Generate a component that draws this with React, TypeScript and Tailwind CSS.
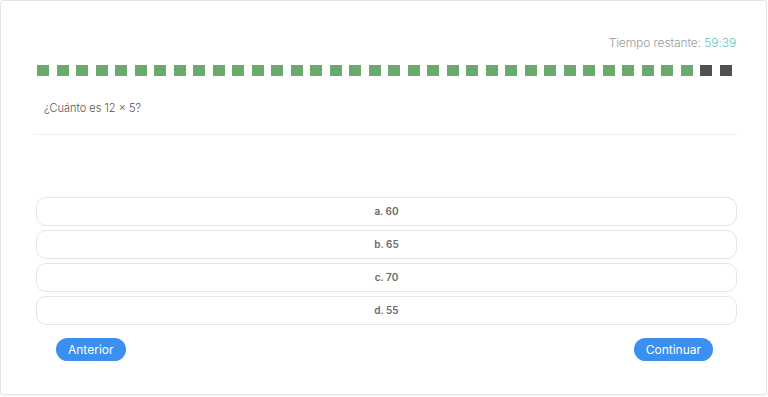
import React from "react";

const squares = Array.from({ length: 36 }, (_, i) => i < 34);
const options = ["a. 60", "b. 65", "c. 70", "d. 55"];

export default function App() {
  return (
    <div className="w-[768px] h-[397px] bg-white" style={{ fontFamily: "Inter, 'Open Sans', sans-serif" }}>
      <div className="w-[767px] h-[395px] border border-[#e4e4e4] rounded-[3px] bg-white shadow-[0_1px_2px_rgba(0,0,0,0.04)] pl-[32px] pr-[29px] pt-[33px]">
        <div className="flex justify-end h-[18px] items-center text-[12px] font-light text-[#9a9a9a] tracking-[-0.1px] pr-[1px]">
          <span>Tiempo restante:&nbsp;</span>
          <span className="text-[#5cc7c0]">59:39</span>
        </div>
        <div className="flex justify-between items-center mt-[12px] h-[12px] pl-[4px] pr-[5px]">
          {squares.map((g, i) => (
            <div key={i} className={g ? "w-[12px] h-[11px] bg-[#6aaa6c]" : "w-[12px] h-[11px] bg-[#505050]"} />
          ))}
        </div>
        <div className="mt-[25px] pl-[11px] h-[14px] flex items-center text-[11px] text-[#555] font-light">¿Cuánto es 12 × 5?</div>
        <div className="mt-[19px] h-px bg-[#efefef]" />
        <div className="mt-[62px] pl-[3px] flex flex-col gap-[4px]">
          {options.map((o) => (
            <div key={o} className="h-[29px] border border-[#e5e5e5] rounded-[10px] flex items-center justify-center text-[10px] font-semibold text-[#6a6a6a]">
              {o}
            </div>
          ))}
        </div>
        <div className="mt-[13px] flex justify-between pl-[23px] pr-[24px]">
          <button className="h-[23px] px-[12px] rounded-full bg-[#3a8ff0] text-white text-[12px]">Anterior</button>
          <button className="h-[23px] px-[12px] rounded-full bg-[#3a8ff0] text-white text-[12px]">Continuar</button>
        </div>
      </div>
    </div>
  );
}
